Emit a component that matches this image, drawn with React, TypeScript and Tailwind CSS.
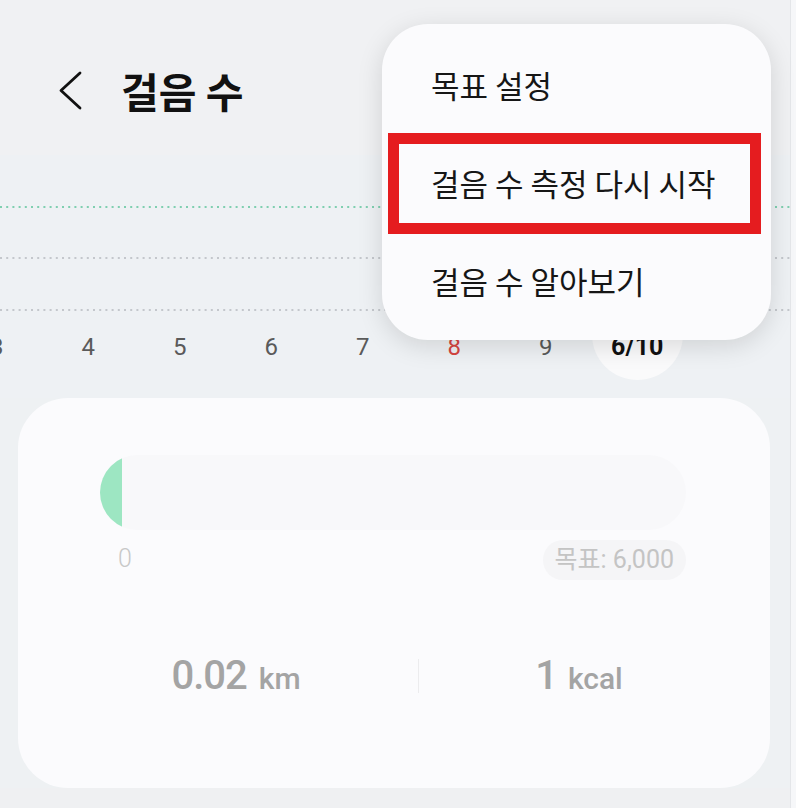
import React from 'react';

const days = ['3', '4', '5', '6', '7', '8', '9', '6/10'];

const ChartLines = () => (
    <svg className="absolute left-0 top-0" width="790" height="243">
        <line x1="0" y1="52" x2="790" y2="52" stroke="#7fcfb0" strokeWidth="2" strokeDasharray="2 4.2" />
        <line x1="0" y1="103" x2="790" y2="103" stroke="#c4c7cc" strokeWidth="2" strokeDasharray="2 4.2" />
        <line x1="0" y1="155" x2="790" y2="155" stroke="#c4c7cc" strokeWidth="2" strokeDasharray="2 4.2" />
    </svg>
);

const OptionsMenu = () => (
    <div
        className="absolute left-[382px] top-[24px] w-[389px] h-[316px] rounded-[46px] bg-[#fbfbfd] shadow-[0_6px_26px_rgba(0,0,0,0.13)] pt-[12px] text-[31px] text-[#161616]"
        style={{ fontFamily: '"Noto Sans CJK KR", sans-serif' }}
    >
        <div className="h-[98px] flex items-center pl-[49px]">목표 설정</div>
        <div className="h-[98px] flex items-center pl-[49px]">걸음 수 측정 다시 시작</div>
        <div className="h-[98px] flex items-center pl-[49px]">걸음 수 알아보기</div>
        {/* highlight frame around the restart item */}
        <div className="absolute left-[6px] top-[109px] w-[373px] h-[101px] border-[11px] border-[#e51c1f]"></div>
    </div>
);

export default function App() {
    return (
        <div
            className="relative w-[796px] h-[808px] overflow-hidden bg-[#eff0f2] flex"
            style={{ fontFamily: 'Roboto, "Noto Sans CJK KR", sans-serif' }}
        >
            <div className="w-[790px] flex flex-col">
                {/* header */}
                <div className="h-[155px] bg-[#f0f1f3] flex items-center pl-[58px] pt-[27px]">
                    <svg width="26" height="40" viewBox="0 0 26 40">
                        <path d="M22 2 L3 19.5 L22 37" fill="none" stroke="#111" strokeWidth="2.8" strokeLinecap="round" strokeLinejoin="round" />
                    </svg>
                    <div
                        className="ml-[37px] text-[41px] font-bold text-[#111]"
                        style={{ fontFamily: '"Noto Sans CJK KR", sans-serif' }}
                    >
                        걸음 수
                    </div>
                </div>

                {/* weekly chart strip */}
                <div className="relative h-[243px] bg-[#eef1f4]">
                    <ChartLines />
                    <div className="absolute left-[-49px] top-[145px] flex">
                        {days.map((d, i) => (
                            <div key={d} className="w-[91.5px] h-[94px] flex items-center justify-center">
                                {i === days.length - 1 ? (
                                    <div className="relative top-[-14px] w-[94px] h-[94px] rounded-full bg-[#fafafb] flex items-center justify-center">
                                        <span className="relative top-[14px] text-[25px] font-bold text-[#111]">{d}</span>
                                    </div>
                                ) : (
                                    <span className={`text-[24px] ${i === 5 ? 'text-[#d6453f]' : 'text-[#5a5a5a]'}`}>{d}</span>
                                )}
                            </div>
                        ))}
                    </div>
                </div>

                {/* today card */}
                <div className="bg-[#eef1f3] pl-[18px] pr-[20px]">
                    <div className="h-[390px] rounded-[50px] bg-[#fbfbfd] pt-[57px]">
                        <div className="ml-[82px] w-[586px]">
                            <div className="h-[75px] rounded-full bg-[#f8f8fa] overflow-hidden">
                                <div className="w-[22px] h-full bg-[#9de6c2]"></div>
                            </div>
                            <div className="mt-[10px] flex justify-between items-start">
                                <span className="pl-[18px] text-[25px] font-light text-[#c8c8c8]">0</span>
                                <span className="h-[40px] px-[12px] rounded-full bg-[#f5f5f7] flex items-center text-[25px] text-[#c4c4c4]">
                                    목표: 6,000
                                </span>
                            </div>
                        </div>
                        <div className="mt-[66px] pl-[36px] flex items-center">
                            <div className="w-[364px] flex justify-center items-baseline text-[#a4a4a4]">
                                <span className="text-[40px] font-medium tracking-[-1px]">0.02</span>
                                <span className="ml-[12px] text-[30px] font-medium">km</span>
                            </div>
                            <div className="w-px h-[34px] bg-[#ececee]"></div>
                            <div className="w-[320px] flex justify-center items-baseline text-[#a4a4a4]">
                                <span className="text-[40px] font-medium">1</span>
                                <span className="ml-[10px] text-[30px] font-medium">kcal</span>
                            </div>
                        </div>
                    </div>
                </div>
                <div className="flex-1 bg-[#eff0f2]"></div>
            </div>
            <div className="w-[6px] border-l border-[#e4e6e9] bg-[#f6f7f9]"></div>

            <OptionsMenu />
        </div>
    );
}
